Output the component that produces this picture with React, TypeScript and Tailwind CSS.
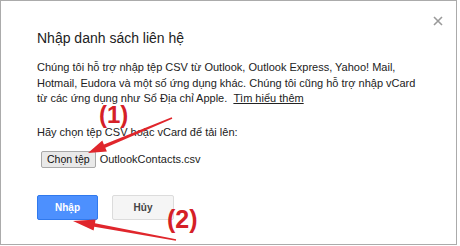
import type { ReactNode } from 'react';

const FONT = { fontFamily: '"Liberation Sans", Arial, sans-serif' };

type Pt = [number, number];

// tapered arrow: thin tail, thick near the head, triangle head at `to`
function arrowPoints(from: Pt, to: Pt, head = 20, wing = 6, tail = 0.8, neck = 1.8) {
  const dx = to[0] - from[0];
  const dy = to[1] - from[1];
  const len = Math.hypot(dx, dy);
  const ux = dx / len;
  const uy = dy / len;
  const nx = -uy;
  const ny = ux;
  const bx = to[0] - ux * head;
  const by = to[1] - uy * head;
  const p = (x: number, y: number) => `${x.toFixed(1)},${y.toFixed(1)}`;
  return [
    p(from[0] + nx * tail, from[1] + ny * tail),
    p(bx + nx * neck, by + ny * neck),
    p(bx + nx * wing, by + ny * wing),
    p(to[0], to[1]),
    p(bx - nx * wing, by - ny * wing),
    p(bx - nx * neck, by - ny * neck),
    p(from[0] - nx * tail, from[1] - ny * tail),
  ].join(' ');
}

function Btn({ children, primary }: { children: ReactNode; primary?: boolean }) {
  return (
    <button
      className={
        primary
          ? 'h-[25px] w-[61px] rounded-[2px] border border-[#3079ed] bg-[#4d90fe] text-[10px] font-bold text-white'
          : 'h-[25px] w-[62px] rounded-[2px] border border-[#dcdcdc] bg-[#f5f5f5] text-[10px] font-bold text-[#444]'
      }
    >
      {children}
    </button>
  );
}

export default function App() {
  return (
    <div className="relative h-[246px] w-[460px] overflow-hidden bg-white" style={FONT}>
      <div className="relative h-[245px] w-[457px] border border-[#ababab] bg-white pl-[36px] pt-[27px]">
        <button className="absolute right-[13px] top-[15px] text-[#9a9a9a]" aria-label="close">
          <svg width="10" height="10" viewBox="0 0 10 10">
            <path d="M1 1L9 9M9 1L1 9" stroke="currentColor" strokeWidth="1.6" />
          </svg>
        </button>

        <h1 className="text-[14px] leading-[20px] text-[#222]">Nhập danh sách liên hệ</h1>

        <p className="mt-[12px] whitespace-nowrap text-[11px] leading-[15.5px] text-[#222]">
          Chúng tôi hỗ trợ nhập tệp CSV từ Outlook, Outlook Express, Yahoo! Mail,
          <br />
          Hotmail, Eudora và một số ứng dụng khác. Chúng tôi cũng hỗ trợ nhập vCard
          <br />
          từ các ứng dụng như Sổ Địa chỉ Apple.&nbsp;&nbsp;
          <span className="underline">Tìm hiểu thêm</span>
        </p>

        <div className="mt-[17px] text-[11px] leading-[16px] text-[#222]">
          Hãy chọn tệp CSV hoặc vCard để tải lên:
        </div>
        <div className="mt-[11px] flex items-center gap-[4px] text-[11px] text-[#222]">
          <button className="ml-[4px] h-[17px] rounded-[2px] border border-[#a9a9a9] bg-[#e9e9e9] px-[5px] text-[10.5px] leading-[15px] text-[#111]">
            Chọn tệp
          </button>
          <span>OutlookContacts.csv</span>
        </div>

        <div className="mt-[27px] flex gap-[14px]">
          <Btn primary>Nhập</Btn>
          <Btn>Hủy</Btn>
        </div>
      </div>

      <div className="pointer-events-none absolute inset-0">
        <div className="absolute left-[99px] top-[101px] text-[24px] font-bold leading-[28px] text-[#d52027]">(1)</div>
        <div className="absolute left-[167px] top-[204px] text-[25px] font-bold leading-[30px] text-[#d52027]">(2)</div>
        <svg className="absolute inset-0" width="460" height="246" viewBox="0 0 460 246">
          <polygon points={arrowPoints([172, 118], [88, 153], 18, 6)} fill="#e0262c" />
          <polygon points={arrowPoints([176, 240], [73, 221], 22, 5.5)} fill="#e0262c" />
        </svg>
      </div>
    </div>
  );
}
